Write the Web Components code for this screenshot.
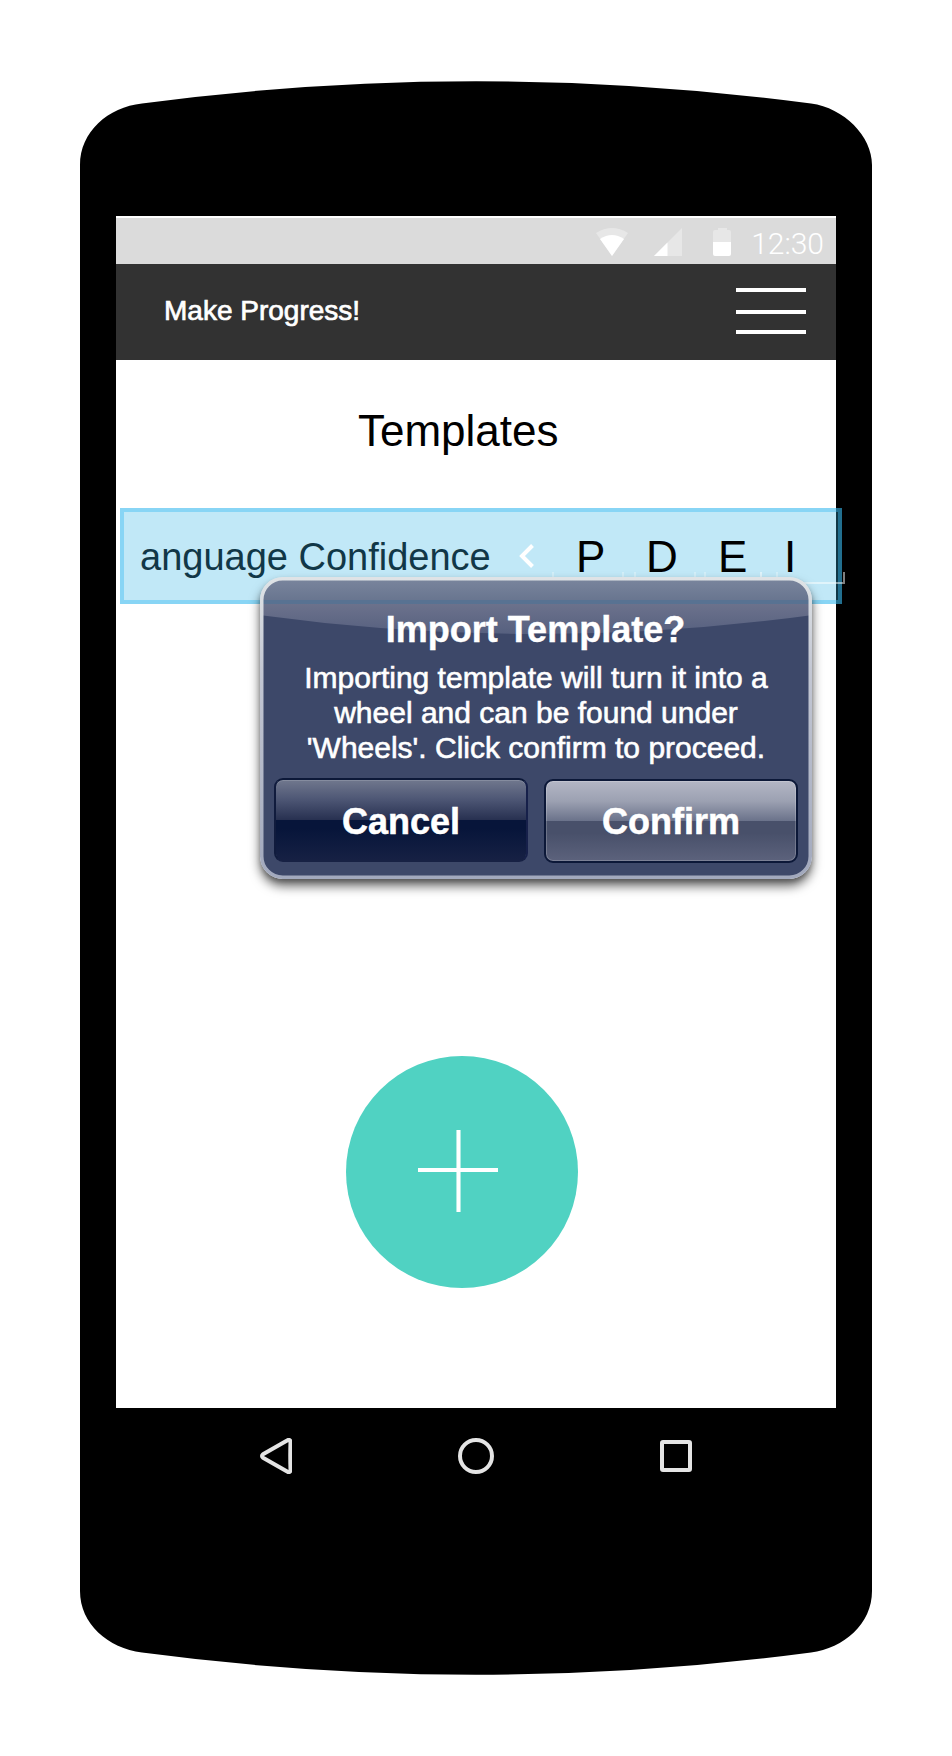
<!DOCTYPE html>
<html lang="en">
<head>
<meta charset="utf-8">
<title>Make Progress!</title>
<style>
html,body{margin:0;background:#fff}
body{font-family:"Liberation Sans",Arial,sans-serif;width:952px;height:1756px;overflow:hidden}
</style>
</head>
<body>
<phone-frame>
  <status-bar>12:30</status-bar>
  <app-bar>Make Progress!</app-bar>
  <page-title>Templates</page-title>
  <template-row letters="P D E I">anguage Confidence</template-row>
  <add-button></add-button>
  <alert-dialog slot="overlay">
    <span slot="title">Import Template?</span>
    Importing template will turn it into a<br>wheel and can be found under<br>'Wheels'. Click confirm to proceed.
    <dialog-button slot="actions" kind="dark">Cancel</dialog-button>
    <dialog-button slot="actions" kind="light">Confirm</dialog-button>
  </alert-dialog>
  <nav-keys slot="nav"></nav-keys>
</phone-frame>
<script>
const define = (name, html, setup) => customElements.define(name, class extends HTMLElement {
  connectedCallback() {
    if (this.shadowRoot) return;
    const t = document.createElement('template');
    t.innerHTML = html;
    const root = this.attachShadow({ mode: 'open' });
    root.append(t.content.cloneNode(true));
    if (setup) setup(this, root);
  }
});

define('phone-frame', `
<style>
:host{display:block;position:relative;isolation:isolate;box-sizing:border-box;width:952px;height:1756px;padding:216px 116px 0}
.shell{position:absolute;left:0;top:0;z-index:-1}
.screen{display:flex;flex-direction:column;box-sizing:border-box;height:1192px;padding-top:2px;background:#fff}
</style>
<svg class="shell" width="952" height="1756" viewBox="0 0 952 1756"><path d="M80 165C80 132 108 107 142 103.500Q309 81.300 476 81.300T811 103.500C844 108 872 136 872 165V1591C872 1624 844 1648 811 1652.500Q643 1674.700 476 1674.700T142 1652.500C108 1648 80 1624 80 1591Z"/></svg>
<div class="screen"><slot></slot></div>
<slot name="nav"></slot>
<slot name="overlay"></slot>`);

define('status-bar', `
<style>
:host{display:flex;box-sizing:border-box;height:46px;padding-right:12px;justify-content:flex-end;background:#dbdbdb;color:#fff;font:300 30px/46px Roboto,sans-serif}
svg{display:block;margin-top:10px}
.wifi{margin-right:26px}.cell{margin-right:31px}.bat{margin-right:20px}
.time{position:relative;top:3px}
</style>
<svg class="wifi" width="32" height="28"><path fill="#e7e7e7" d="M0 5Q16-5 32 5L16 28Z"/><path fill="#fff" d="M4 11Q16 3 28 11L16 28Z"/></svg>
<svg class="cell" width="28" height="28"><path fill="#e7e7e7" d="M28 0V28H0Z"/><path fill="#fff" d="M0 28L13.500 14.500V28Z"/></svg>
<svg class="bat" width="18" height="28"><path fill="#e7e7e7" d="M5 0H14V2H16Q18 2 18 4V14H0V4Q0 2 2 2H5Z"/><path fill="#fff" d="M0 14H18V26Q18 28 16 28H2Q0 28 0 26Z"/></svg>
<span class="time"><slot></slot></span>`);

define('app-bar', `
<style>
:host{display:flex;box-sizing:border-box;height:96px;padding:0 30px 0 48px;justify-content:space-between;background:#323232;color:#fff;font-size:28px;line-height:93px;-webkit-text-stroke:.7px #fff}
svg{display:block;margin-top:24px}
</style>
<span><slot></slot></span>
<svg width="70" height="46" fill="#fff" stroke="none"><path d="M0 0H70V4H0ZM0 22H70V26H0ZM0 42H70V46H0Z"/></svg>`);

define('page-title', `
<style>:host{display:block;height:148px;padding-left:242px;font-size:44px;line-height:50px;box-sizing:border-box;padding-top:46px;color:#000}</style><slot></slot>`);

define('template-row', `
<style>
:host{display:flex;position:relative;box-sizing:border-box;height:96px;width:722px;margin-left:4px;border:4px solid rgba(57,185,238,.6);background:rgba(55,181,229,.31) padding-box;padding-left:16px;align-items:flex-start;color:#113747;font-size:38px;line-height:44px}
.name{width:377px;margin-top:23px}
.chev{margin-top:32px;margin-right:16px}
.letters{display:grid;grid-template-columns:70px 72px 66px 20px;margin-left:23px;padding-top:20px;font-size:44px;line-height:50px;color:#000}
.marks{position:absolute;left:425px;top:60px}
</style>
<span class="name"><slot></slot></span>
<svg class="chev" width="20" height="24"><path d="M15.500 1.500L5 12L15.500 22.500" fill="none" stroke="#fff" stroke-width="4"/></svg>
<div class="letters"></div>
<svg class="marks" width="300" height="14" fill="none" stroke="#fff" stroke-opacity=".5" stroke-width="2"><path stroke-opacity=".3" d="M4 0V5M74 0V5M86 0V5M146 0V5M156 0V5M228 0V5"/><path d="M212 0V11H295V0"/></svg>`,
(host, root) => {
  const box = root.querySelector('.letters');
  for (const c of host.getAttribute('letters').split(' ')) {
    const s = document.createElement('span'); s.textContent = c; box.append(s);
  }
});

define('add-button', `
<style>:host{display:block;margin:452px 0 0 230px;width:232px;height:232px;border-radius:50%;background:#50d2c2}svg{display:block}</style>
<svg width="232" height="232" stroke="#fff"><path d="M72 114H152" stroke-width="4"/><path d="M112.500 74V156" stroke-width="5" stroke-opacity=".55"/><path d="M112.500 74V156" stroke-width="3"/></svg>`);

define('alert-dialog', `
<style>
:host{display:block;position:absolute;left:260px;top:577px;width:552px;height:302px;border-radius:23px;box-shadow:0 7px 11px rgba(0,0,0,.6),0 3px 4px rgba(0,0,0,.2);color:#fff;text-align:center}
.art{position:absolute;inset:0}
.content{position:relative;display:flex;flex-direction:column;height:100%}
h2{margin:0;padding-top:33px;font-size:36px;line-height:40px;-webkit-text-stroke:.4px #fff;padding-right:1px}
p{margin:10px 0 0;font-size:30px;line-height:35px;-webkit-text-stroke:.6px #fff}
.actions{display:flex;gap:16px;margin:13px 0 0 14px}
</style>
<svg class="art" width="552" height="302">
<defs>
<linearGradient id="g" x1="0" y1="0" x2="0" y2="1"><stop offset="0" stop-color="#7b869e"/><stop offset=".42" stop-color="#68758f"/><stop offset=".47" stop-color="#6c728c"/><stop offset="1" stop-color="#56607f"/></linearGradient>
<linearGradient id="b" x1="0" y1="0" x2="0" y2="1"><stop offset="0" stop-color="#dfe3e6"/><stop offset=".3" stop-color="#c4c8d4"/><stop offset="1" stop-color="#a2a9bd"/></linearGradient>
<clipPath id="c"><rect x="1" y="1" width="550" height="300" rx="22"/></clipPath>
</defs>
<rect x="1" y="1" width="550" height="300" rx="22" fill="#3d4869"/>
<g clip-path="url(#c)"><path d="M0 0H552V38Q276 76 0 38Z" fill="url(#g)"/><path d="M0 23H552V27H0Z" fill="#587292"/></g>
<rect x="1.750" y="1.750" width="548.500" height="298.500" rx="21" fill="none" stroke="url(#b)" stroke-width="3.500"/>
</svg>
<div class="content">
<h2><slot name="title"></slot></h2>
<p><slot></slot></p>
<div class="actions"><slot name="actions"></slot></div>
</div>`);

define('dialog-button', `
<style>
:host{display:block;box-sizing:border-box;width:254px;height:84px;border:2px solid #0c1838;border-radius:9px;font-weight:bold;font-size:36px;line-height:83px;color:#fff;text-align:center;-webkit-text-stroke:.5px #fff;
background:linear-gradient(#747b90,#4e5775 25%,#283151 49.500%,#07153a 50%,#07153a 60%,#172144 100%) border-box;box-shadow:inset 0 1px #858c9f}
:host([kind=light]){margin-top:1px;line-height:81px;background:linear-gradient(#b3b6c5,#9ca1b2 25%,#6b738b 49.500%,#48506a 50%,#48506a 65%,#5c627c 100%);box-shadow:inset 0 0 0 1px rgba(255,255,255,.2)}
:host([kind=dark]){border-color:#0c1838 #16204a #172144 #101b3d}
</style><slot></slot>`);

define('nav-keys', `
<style>:host{display:flex;justify-content:space-between;align-items:center;box-sizing:border-box;height:96px;padding:0 144px}svg{display:block;fill:none;stroke:#e4e4e4;stroke-width:4;stroke-linejoin:round}</style>
<svg width="32" height="36"><path d="M3 16.300Q1 18 3 19.700L28 34Q30.500 34.500 30.500 32Q30 18 30.500 4Q30.500 1.500 28 2Z"/></svg>
<svg width="36" height="36"><circle cx="18" cy="18" r="16"/></svg>
<svg width="32" height="32"><rect x="2" y="2" width="28" height="28" rx="1"/></svg>`);
</script>
</body>
</html>
